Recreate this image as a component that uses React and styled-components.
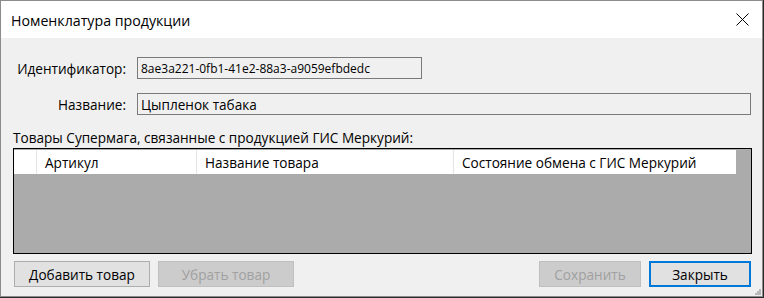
import React from "react"
import styled, { createGlobalStyle } from "styled-components"

const GlobalStyle = createGlobalStyle`
  html, body {
    margin: 0;
    padding: 0;
    background: #2a2a2a;
  }
  * {
    box-sizing: border-box;
  }
`

const Window = styled.div`
  position: relative;
  width: 763px;
  height: 297px;
  border: 1px solid #8c8c8c;
  background: #f0f0f0;
  display: flex;
  flex-direction: column;
  font-family: "Open Sans", "Liberation Sans", sans-serif;
  font-size: 13.6px;
  color: #000;
`

const TitleBar = styled.div`
  height: 37px;
  background: #fff;
  display: flex;
  align-items: center;
  justify-content: space-between;
  padding-left: 10px;
`

const Title = styled.span`
  font-size: 14.2px;
  padding-top: 1px;
`

const CloseButton = styled.div`
  width: 40px;
  height: 37px;
  display: flex;
  align-items: center;
  justify-content: center;
`

const Body = styled.div`
  flex: 1;
  display: flex;
  flex-direction: column;
  padding: 19px 10px 9px 12px;
`

const FieldRow = styled.div`
  display: grid;
  grid-template-columns: 113px auto;
  column-gap: 11px;
  align-items: center;
  margin-bottom: ${(p) => p.$gap || 0}px;
`

const Label = styled.label`
  text-align: right;
  color: #000;
  white-space: nowrap;
`

const TextBox = styled.div`
  width: ${(p) => p.$width}px;
  height: 22px;
  border: 1px solid #7a7a7a;
  background: #f0f0f0;
  padding-left: 3px;
  display: flex;
  align-items: center;
  white-space: nowrap;
  overflow: hidden;
  font-size: ${(p) => p.$size || 13.6}px;
`

const SectionLabel = styled.div`
  line-height: 15px;
  margin-top: 15px;
  margin-bottom: 3px;
`

const Grid = styled.div`
  height: 106px;
  border: 1px solid #000;
  background: #ababab;
  padding-top: 1px;
`

const HeaderRow = styled.div`
  display: grid;
  grid-template-columns: 23px 160px 257px 282px;
  height: 24px;
  background: #fff;
  width: 722px;
`

const HeaderCell = styled.div`
  display: flex;
  align-items: center;
  padding-left: 8px;
  white-space: nowrap;
  border-right: 1px solid #e5e5e5;
  &:last-child {
    border-right: none;
  }
`

const ButtonBar = styled.div`
  display: flex;
  justify-content: space-between;
  margin-top: 7px;
  padding-left: 1px;
  padding-right: 1px;
`

const ButtonGroup = styled.div`
  display: flex;
  gap: 8px;
`

const Button = styled.div`
  width: ${(p) => p.$width}px;
  height: 26px;
  display: flex;
  align-items: center;
  justify-content: center;
  white-space: nowrap;
  background: ${(p) => (p.$disabled ? "#cccccc" : "#e1e1e1")};
  border: ${(p) =>
    p.$focused ? "2px solid #0078d7" : p.$disabled ? "1px solid #bfbfbf" : "1px solid #adadad"};
  color: ${(p) => (p.$disabled ? "#a0a0a0" : "#000")};
`

const SizeGrip = styled.svg`
  position: absolute;
  right: 1px;
  bottom: 1px;
`

const App = () => {
  return (
    <>
      <GlobalStyle />
      <Window>
        <TitleBar>
          <Title>Номенклатура продукции</Title>
          <CloseButton>
            <svg width="13" height="13" viewBox="0 0 13 13">
              <path d="M0.5 0.5 L12.5 12.5 M12.5 0.5 L0.5 12.5" stroke="#000" strokeWidth="1" />
            </svg>
          </CloseButton>
        </TitleBar>
        <Body>
          <FieldRow $gap={14}>
            <Label>Идентификатор:</Label>
            <TextBox $width={285} $size={12}>8ae3a221-0fb1-41e2-88a3-a9059efbdedc</TextBox>
          </FieldRow>
          <FieldRow>
            <Label>Название:</Label>
            <TextBox $width={614}>Цыпленок табака</TextBox>
          </FieldRow>
          <SectionLabel>Товары Супермага, связанные с продукцией ГИС Меркурий:</SectionLabel>
          <Grid>
            <HeaderRow>
              <HeaderCell />
              <HeaderCell>Артикул</HeaderCell>
              <HeaderCell>Название товара</HeaderCell>
              <HeaderCell>Состояние обмена с ГИС Меркурий</HeaderCell>
            </HeaderRow>
          </Grid>
          <ButtonBar>
            <ButtonGroup>
              <Button $width={136}>Добавить товар</Button>
              <Button $width={136} $disabled>Убрать товар</Button>
            </ButtonGroup>
            <ButtonGroup>
              <Button $width={102} $disabled>Сохранить</Button>
              <Button $width={102} $focused>Закрыть</Button>
            </ButtonGroup>
          </ButtonBar>
        </Body>
        <SizeGrip width="6" height="6" viewBox="0 0 6 6">
          <rect x="4" y="0" width="2" height="2" fill="#b8b8b8" />
          <rect x="2" y="2" width="2" height="2" fill="#b8b8b8" />
          <rect x="4" y="2" width="2" height="2" fill="#b8b8b8" />
          <rect x="0" y="4" width="2" height="2" fill="#b8b8b8" />
          <rect x="2" y="4" width="2" height="2" fill="#b8b8b8" />
          <rect x="4" y="4" width="2" height="2" fill="#b8b8b8" />
        </SizeGrip>
      </Window>
    </>
  )
}

export default App
